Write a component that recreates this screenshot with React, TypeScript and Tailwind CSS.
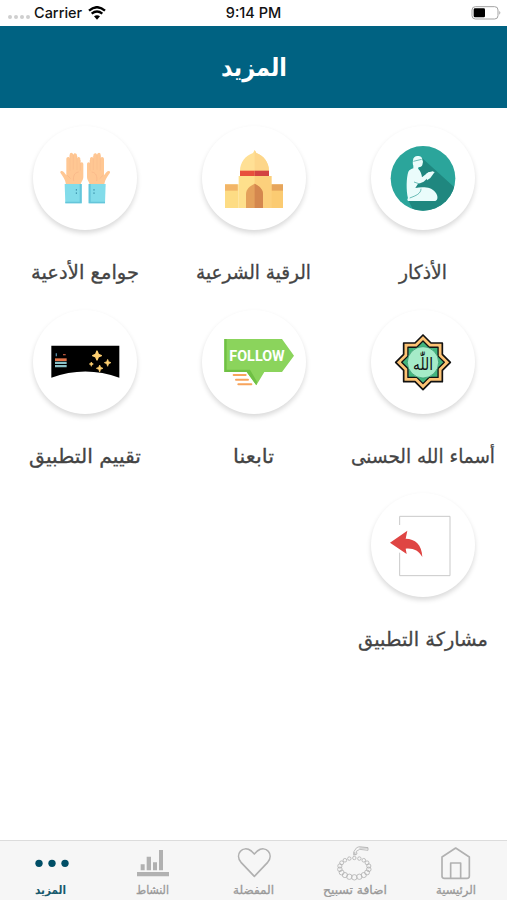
import type { ReactNode } from "react";

const STAR =
  "0,-82 24,-58 58,-58 58,-24 82,0 58,24 58,58 24,58 0,82 -24,58 -58,58 -58,24 -82,0 -58,-24 -58,-58 -24,-58";

function PrayerIcon() {
  return (
    <svg viewBox="33 18 312 312" className="size-full">
      <defs>
        <clipPath id="disc">
          <circle cx="189" cy="175" r="97" />
        </clipPath>
      </defs>
      <circle cx="189" cy="175" r="97" fill="#2ba59b" />
      <path clipPath="url(#disc)" d="M187 115l102 92v80H168l-22-44 30-90z" fill="#1f877f" />
      <path d="M159 121c0-9 7-14 16-13 7 0 12 5 12 11l2 6-2 10c-2 5-7 7-11 6l-2 5c8 6 11 17 12 26l19-15 15-3-7 11-22 20-18 8-7 11c20-4 49-4 60 13 10 13 7 24 0 26h-82c-2-3-3-6 0-8-6-24-5-62 1-80 4-6 9-8 15-10v-8c-2-4-2-10-1-16z" fill="#eafcfb" />
      <path d="M183 206c0 15-15 21-34 28M160 124l25-6M162 186l20 7" fill="none" stroke="#2b9c94" strokeWidth="2" />
      <path d="M198 162c9-6 19-8 26-6l-13 18-10 7z" fill="#eafcfb" />
    </svg>
  );
}

function MosqueIcon() {
  return (
    <svg viewBox="36 18 312 312" className="size-full">
      <path d="M105 193h41v71h-41z" fill="#fddc84" />
      <path d="M105 193h38v19h-38z" fill="#f2b568" />
      <path d="M241 193h38v71h-38z" fill="#fbcb72" />
      <path d="M244 193h35v19h-35z" fill="#e6a55c" />
      <path d="M194 90l-5 9c-23 8-39 28-39 54v16h87v-16c0-26-16-46-38-54z" fill="#ffe095" />
      <path d="M194 90v79h43v-16c0-26-16-46-38-54z" fill="#fdd68a" />
      <path d="M146 168h97v96h-97z" fill="#fee08c" />
      <path d="M194 168h51v96h-51z" fill="#fcd07c" />
      <path d="M150 152h44v16h-44z" fill="#e84f3d" />
      <path d="M194 152h43v16h-43z" fill="#d34242" />
      <path d="M168 264v-42c0-14 11-24 26-31 14 7 25 17 25 31v42z" fill="#e4a15b" />
      <path d="M194 191c14 7 25 17 25 31v42h-25z" fill="#d4874e" />
    </svg>
  );
}

function Hand() {
  return (
    <g>
      <path d="M138 194c-1-11-5-19-17-36-1-6 6-7 11-1l7 9v-49c0-8 10-8 10-1v-11c0-8 9-9 11 0 1-8 11-6 11 2v9c1-7 10-6 10 1v12c4-4 9-2 9 4v37c0 11-7 15-8 24z" fill="#ffc793" />
      <path d="M150 106v46M160 103v46M171 108v42M181 120v32" stroke="#f9b98a" strokeWidth="1.4" />
      <path d="M176 156c-14 2-17 14-15 27M142 166l10 10" stroke="#f5b084" strokeWidth="1.6" fill="none" />
      <path d="M134 192h51v58h-49z" fill="#82dcea" />
      <path d="M179 192h6v58h-6zM136 245h49v5h-49z" fill="#65c5da" />
      <path d="M169 207v5m0 5v5" stroke="#3a91a9" strokeWidth="3" />
    </g>
  );
}

function HandsIcon() {
  return (
    <svg viewBox="39 18 312 312" className="size-full">
      <Hand />
      <g transform="matrix(-1 0 0 1 391 0)">
        <Hand />
      </g>
    </svg>
  );
}

function NamesIcon() {
  return (
    <svg viewBox="78 13 312 312" className="size-full">
      <g transform="translate(234 170)" strokeLinejoin="round">
        <polygon points={STAR} fill="#fdc374" stroke="#111" strokeWidth="5" />
        <polygon points={STAR} transform="scale(.78)" fill="#42b57d" stroke="#111" strokeWidth="5" />
        <circle r="47" fill="#a5ebc8" stroke="#2f8f66" strokeWidth="2" />
        <text
          y="22"
          textAnchor="middle"
          textLength="60"
          lengthAdjust="spacingAndGlyphs"
          fontSize="50"
          fontFamily="DejaVu Sans"
          fill="#111"
        >
          اللّٰه
        </text>
      </g>
    </svg>
  );
}

function FollowIcon() {
  return (
    <svg viewBox="36 13 312 312" className="size-full">
      <path d="M103 100h173l36 50-36 49h-53l-24 40-29-40h-67z" fill="#8bd45c" />
      <path d="M103 100h7v92h70l21 36-2 11-29-40h-67z" fill="#6fc044" />
      <path d="M131 208h36M138 222h36M145 236h39" stroke="#f7a45c" strokeWidth="6" strokeLinecap="round" />
      <text
        x="201"
        y="165"
        textAnchor="middle"
        textLength="166"
        lengthAdjust="spacingAndGlyphs"
        fontSize="43"
        fontWeight="700"
        fontFamily="Roboto"
        fill="#fff"
      >
        FOLLOW
      </text>
    </svg>
  );
}

function RateIcon() {
  return (
    <svg viewBox="39 13 312 312" className="size-full">
      <path d="M94 120h204v96q-102-37-204 0z" fill="#000" />
      <path d="M105 158h35v8h-35z" fill="#e57449" />
      <path d="M105 168h35v7h-35zM105 178h35v7h-35z" fill="#8cc2c8" />
      <path d="M109 143v9" stroke="#5286a0" strokeWidth="4" />
      <path d="M129 147h8" stroke="#b15239" strokeWidth="4" />
      <g fill="#ffd071" stroke="#ffd071" strokeWidth="2" strokeLinejoin="round">
        <path d="M231 136l4 10 9 4-9 4-4 9-4-9-9-4 9-4z" strokeWidth="4" />
        <path d="M263 161l3 7 7 3-7 3-3 8-3-8-7-3 7-3z" />
        <path d="M214 169l2 4 4 2-4 2-2 5-2-5-4-2 4-2z" />
        <path d="M239 178l3 7 7 3-7 3-3 8-3-8-7-3 7-3z" />
      </g>
    </svg>
  );
}

function ShareIcon() {
  return (
    <svg viewBox="78 22 312 312" className="size-full">
      <path d="M164 118V92h151v178H164v-69" fill="none" stroke="#c9c9c9" strokeWidth="3" />
      <path d="M135 171l52-36-5 24c28 0 49 18 50 55-11-19-26-27-50-25l3 16z" fill="#df4543" />
    </svg>
  );
}

const items: { label: string; icon: ReactNode; size: string }[] = [
  { label: "الأذكار", icon: <PrayerIcon />, size: "w-[48px]" },
  { label: "الرقية الشرعية", icon: <MosqueIcon />, size: "w-[115px]" },
  { label: "جوامع الأدعية", icon: <HandsIcon />, size: "w-[108px]" },
  { label: "أسماء الله الحسنى", icon: <NamesIcon />, size: "w-[144px]" },
  { label: "تابعنا", icon: <FollowIcon />, size: "w-[41px]" },
  { label: "تقييم التطبيق", icon: <RateIcon />, size: "w-[112px]" },
  { label: "مشاركة التطبيق", icon: <ShareIcon />, size: "w-[130px]" },
];

const beads = Array.from({ length: 18 }, (_, i) => {
  const angle = -Math.PI / 2 + (i * Math.PI * 2) / 18;
  return { x: 313 + Math.cos(angle) * 44, y: 98 + Math.sin(angle) * 29, r: 6.6 + Math.sin(angle) * 1.5 };
});

const tabs: { label: string; icon: ReactNode; active?: boolean; size: string }[] = [
  {
    label: "الرئيسية",
    size: "w-[40px]",
    icon: (
      <svg viewBox="559 24 120 120" className="size-10" fill="none" stroke="#b1b1b1" strokeWidth="5" strokeLinejoin="round">
        <path d="M577 66l41-27 41 27v57q0 7-7 7h-68q-7 0-7-7z" />
        <path d="M603 130V84h30v46" />
      </svg>
    ),
  },
  {
    label: "اضافة تسبيح",
    size: "w-[64px]",
    icon: (
      <svg viewBox="255 24 120 120" className="size-10" fill="none" stroke="#b0b0b0" strokeWidth="2.4">
        {beads.map((b) => (
          <circle key={`${b.x}-${b.y}`} cx={b.x} cy={b.y} r={b.r} />
        ))}
        <path d="M312 62V49l8-11 8-3 26 3v8l-25-3-10 6 2 8-6 3M328 39h26M309 54h8M310 58h8" />
      </svg>
    ),
  },
  {
    label: "المفضلة",
    size: "w-[41px]",
    icon: (
      <svg viewBox="700 24 120 120" className="size-10" fill="none" stroke="#b1b1b1" strokeWidth="5" strokeLinejoin="round">
        <path d="M761 124l-40-42c-20-24 5-53 31-34l9 9 9-9c26-19 51 10 31 34z" />
      </svg>
    ),
  },
  {
    label: "النشاط",
    size: "w-[33px]",
    icon: (
      <svg viewBox="396 24 120 120" className="size-10" fill="#b1b1b1">
        <path d="M411 111h96v13h-96zM422 88h12v18h-12zM440 65h13v41h-13zM459 82h12v24h-12zM477 45h12v61h-12z" />
      </svg>
    ),
  },
  {
    label: "المزيد",
    active: true,
    size: "w-[31px]",
    icon: (
      <svg viewBox="92 24 120 120" className="size-10" fill="#004e66">
        <circle cx="116" cy="85" r="11" />
        <circle cx="155" cy="85" r="11" />
        <circle cx="194" cy="85" r="11" />
      </svg>
    ),
  },
];

// Keeps the Arabic letters joined while the word fills its box.
function Label({ text, className, fontSize, bold }: { text: string; className: string; fontSize: number; bold?: boolean }) {
  return (
    <svg className={`h-8 overflow-visible ${className}`} direction="rtl">
      <text
        x="50%"
        y="21"
        textAnchor="middle"
        textLength="100%"
        lengthAdjust="spacingAndGlyphs"
        fontSize={fontSize}
        fontWeight={bold ? 700 : 400}
        fontFamily="'DejaVu Sans', sans-serif"
        fill="currentColor"
        stroke="currentColor"
        strokeWidth={bold ? 0 : 0.3}
      >
        {text}
      </text>
    </svg>
  );
}

function StatusBar() {
  return (
    <div className="grid h-[26px] grid-cols-3 items-center bg-white px-2 font-['Inter',sans-serif] text-[14.5px] font-medium text-[#111]">
      <div className="flex items-center">
        <div className="mt-2 flex gap-[2px]">
          {[0, 1, 2, 3].map((n) => (
            <span key={n} className="size-[4px] rounded-full bg-[#cfcfcf]" />
          ))}
        </div>
        <span className="ml-1">Carrier</span>
        <svg viewBox="0 0 54 42" className="ml-[6px] h-[14px] w-[18px]">
          <path d="M3 14q24-21 48 0M11 23q16-13 32 0" fill="none" stroke="#000" strokeWidth="7" />
          <path d="M18 31q9-7 18 0l-9 10z" fill="#000" />
        </svg>
      </div>
      <span className="text-center whitespace-nowrap">9:14 PM</span>
      <svg viewBox="0 0 90 42" className="-mr-[2px] h-[14px] w-[30px] justify-self-end">
        <rect x="3" y="2" width="78" height="37" rx="10" fill="none" stroke="#a3a3a3" strokeWidth="3" />
        <rect x="8" y="7" width="34" height="27" rx="4" fill="#000" />
        <path d="M85 15q6 5 0 11z" fill="#a3a3a3" />
      </svg>
    </div>
  );
}

export default function App() {
  return (
    <div className="flex h-[900px] w-[507px] flex-col overflow-hidden bg-white">
      <StatusBar />
      <header className="flex h-[82px] items-center justify-center bg-[#006282] pt-2 text-white">
        <Label text="المزيد" className="w-[66px]" fontSize={25} bold />
      </header>

      <main dir="rtl" className="grid flex-1 auto-rows-[183.5px] grid-cols-3 pt-[18px]">
        {items.map((item) => (
          <div key={item.label} className="flex flex-col items-center text-[#444]">
            <div className="size-[104px] rounded-full bg-white shadow-[0_3px_5px_rgba(0,0,0,0.15)]">{item.icon}</div>
            <div className="mt-[28px]">
              <Label text={item.label} className={item.size} fontSize={19.5} />
            </div>
          </div>
        ))}
      </main>

      <nav dir="rtl" className="grid h-[60px] grid-cols-5 border-t border-[#dcdcdc] bg-[#f6f6f6] pt-[2px]">
        {tabs.map((tab) => (
          <div key={tab.label} className={`flex flex-col items-center ${tab.active ? "text-[#17596d]" : "text-[#999]"}`}>
            {tab.icon}
            <div className="-mt-[10px]">
              <Label text={tab.label} className={tab.size} fontSize={11.5} bold={tab.active} />
            </div>
          </div>
        ))}
      </nav>
    </div>
  );
}
